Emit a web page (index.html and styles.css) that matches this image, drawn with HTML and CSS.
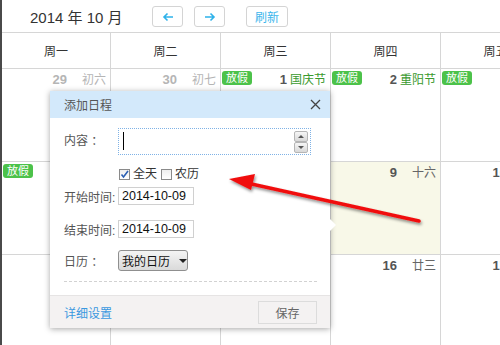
FILE: index.html
```html
<!DOCTYPE html>
<html lang="zh-CN">
<head>
  <meta charset="UTF-8">
  <title>日程</title>
  <link rel="stylesheet" href="styles.css">
</head>
<body>
  <div class="page">
    <div class="toolbar">
      <h2 class="month-title">2014 年 10 月</h2>
      <button class="nav-btn">
        <svg width="12" height="10" viewBox="0 0 12 10"><path d="M11 5H2M5.5 1.5L2 5l3.5 3.5" fill="none" stroke="#2eb2ea" stroke-width="1.6"/></svg>
      </button>
      <button class="nav-btn next">
        <svg width="12" height="10" viewBox="0 0 12 10"><path d="M1 5h9M6.5 1.5L10 5 6.5 8.5" fill="none" stroke="#2eb2ea" stroke-width="1.6"/></svg>
      </button>
      <button class="nav-btn refresh">刷新</button>
    </div>

    <div class="calendar">
      <div class="week-head">周一</div>
      <div class="week-head">周二</div>
      <div class="week-head">周三</div>
      <div class="week-head">周四</div>
      <div class="week-head">周五</div>

      <div class="day other"><span class="num">29</span><span class="lunar">初六</span></div>
      <div class="day other"><span class="num">30</span><span class="lunar">初七</span></div>
      <div class="day"><span class="badge">放假</span><span class="num">1</span><span class="lunar fest">国庆节</span></div>
      <div class="day"><span class="badge">放假</span><span class="num">2</span><span class="lunar fest">重阳节</span></div>
      <div class="day"><span class="badge">放假</span></div>

      <div class="day"><span class="badge">放假</span></div>
      <div class="day"></div>
      <div class="day"></div>
      <div class="day today"><span class="num">9</span><span class="lunar">十六</span></div>
      <div class="day"><span class="num">10</span><span class="lunar">十七</span></div>

      <div class="day"></div>
      <div class="day"></div>
      <div class="day"></div>
      <div class="day"><span class="num">16</span><span class="lunar">廿三</span></div>
      <div class="day"><span class="num">17</span><span class="lunar">廿四</span></div>
    </div>

    <div class="popup">
      <div class="popup-head">
        <span>添加日程</span>
        <svg class="close" width="11" height="11" viewBox="0 0 11 11"><path d="M1 1l9 9M10 1l-9 9" stroke="#444" stroke-width="1.3"/></svg>
      </div>
      <div class="popup-body">
        <div class="row content-row">
          <label class="field-label">内容 ：</label>
          <div class="textarea">
            <span class="caret"></span>
            <div class="spin">
              <span class="spin-btn"><i class="tri up"></i></span>
              <span class="spin-btn"><i class="tri down"></i></span>
            </div>
          </div>
        </div>
        <div class="row check-row">
          <span class="check on">
            <svg width="9" height="9" viewBox="0 0 9 9"><path d="M1.5 4.5l2 2.5L8 1" fill="none" stroke="#2b5fb3" stroke-width="1.6"/></svg>
          </span>
          <span class="check-text">全天</span>
          <span class="check"></span>
          <span class="check-text">农历</span>
        </div>
        <div class="row date-row">
          <label class="field-label">开始时间:</label>
          <div class="date-input">2014-10-09</div>
        </div>
        <div class="row date-row end">
          <label class="field-label">结束时间:</label>
          <div class="date-input">2014-10-09</div>
        </div>
        <div class="row cal-row">
          <label class="field-label">日历 ：</label>
          <div class="select">我的日历<i class="tri down dark"></i></div>
        </div>
        <div class="divider"></div>
      </div>
      <div class="popup-foot">
        <a href="#" class="more-link">详细设置</a>
        <button class="save-btn">保存</button>
      </div>
    </div>

    <svg class="pointer" width="500" height="345" viewBox="0 0 500 345">
      <defs>
        <filter id="shade" x="-10%" y="-50%" width="120%" height="200%">
          <feDropShadow dx="1" dy="2" stdDeviation="1.5" flood-color="#000" flood-opacity="0.45"/>
        </filter>
      </defs>
      <g filter="url(#shade)">
        <path d="M247 183L419 221" stroke="#f01010" stroke-width="3.5" stroke-linecap="round"/>
        <path d="M229 179L255 174L251 190Z" fill="#f01010"/>
      </g>
    </svg>
  </div>
</body>
</html>
```

FILE: styles.css
```css
* {
  box-sizing: border-box;
}
body {
  margin: 0;
  font-family: "Liberation Sans", "Noto Sans CJK SC", sans-serif;
  font-size: 12px;
  color: #333;
  background: #fff;
}
.page {
  position: relative;
  width: 500px;
  height: 345px;
  overflow: hidden;
  border-left: 2px solid #4a4a4a;
}

.toolbar {
  display: flex;
  align-items: center;
  height: 32px;
  padding-top: 1px;
}
.month-title {
  width: 150px;
  margin: 0;
  padding-left: 28px;
  font-size: 15px;
  font-weight: normal;
  color: #333;
}
.nav-btn {
  display: flex;
  align-items: center;
  justify-content: center;
  width: 31px;
  height: 21px;
  padding: 0;
  background: #fff;
  border: 1px solid #d4d4d4;
  border-radius: 3px;
  font-family: inherit;
}
.nav-btn.next {
  margin-left: 11px;
}
.nav-btn.refresh {
  width: 42px;
  margin-left: 21px;
  font-size: 12px;
  color: #3cb6ec;
}

.calendar {
  display: grid;
  grid-template-columns: 109px 110px 110px 110px 110px;
  grid-template-rows: 36px 93px 93px 93px;
  border-top: 1px solid #d6d6d6;
}
.week-head {
  display: flex;
  align-items: center;
  justify-content: center;
  border-right: 1px solid #d6d6d6;
  border-bottom: 1px solid #d6d6d6;
  font-size: 12px;
  color: #333;
}
.week-head:last-child {
  justify-content: flex-start;
  padding-left: 44px;
}
.day {
  display: flex;
  align-items: flex-start;
  justify-content: flex-end;
  padding: 2px 4px 0 0;
  border-right: 1px solid #d6d6d6;
  border-bottom: 1px solid #d6d6d6;
}
.day.today {
  background: #f8f8e8;
}
.num {
  margin-top: 1px;
  margin-right: 3px;
  font-size: 13px;
  font-weight: bold;
  line-height: 16px;
  color: #555;
}
.lunar {
  width: 36px;
  margin-top: 1px;
  text-align: right;
  font-size: 12px;
  line-height: 16px;
  color: #666;
  white-space: nowrap;
}
.lunar.fest {
  color: #3a9a2e;
}
.day.other .num,
.day.other .lunar {
  color: #b5b5b5;
}
.badge {
  margin-right: auto;
  margin-left: 1px;
  padding: 0 4px;
  height: 14px;
  line-height: 14px;
  font-size: 11px;
  color: #fff;
  background: #4cc24a;
  border-radius: 3px;
}

.popup {
  position: absolute;
  left: 48px;
  top: 91px;
  width: 280px;
  background: #fff;
  box-shadow: 0 1px 6px rgba(0, 0, 0, 0.35);
}
.popup::after {
  content: "";
  position: absolute;
  right: -6px;
  top: 128px;
  border-top: 6px solid transparent;
  border-bottom: 6px solid transparent;
  border-left: 6px solid #fff;
}
.popup-head {
  display: flex;
  align-items: center;
  justify-content: space-between;
  height: 27px;
  padding: 0 9px 0 14px;
  background: #d3e9fb;
  color: #555;
}
.popup-body {
  padding: 10px 14px 0;
}
.row {
  display: flex;
  align-items: center;
}
.field-label {
  width: 54px;
  color: #555;
  font-size: 12px;
}
.content-row {
  align-items: flex-start;
}
.content-row .field-label {
  margin-top: 3px;
}
.textarea {
  position: relative;
  width: 193px;
  height: 27px;
  border: 1px dotted #7fb2e6;
}
.caret {
  position: absolute;
  left: 4px;
  top: 3px;
  width: 1px;
  height: 18px;
  background: #000;
}
.spin {
  position: absolute;
  right: 2px;
  top: 2px;
  display: flex;
  flex-direction: column;
}
.spin-btn {
  display: flex;
  align-items: center;
  justify-content: center;
  width: 14px;
  height: 11px;
  background: linear-gradient(#f6f6f6, #d8d8d8);
  border: 1px solid #b5b5b5;
  border-radius: 2px;
}
.tri {
  width: 0;
  height: 0;
  border-left: 3px solid transparent;
  border-right: 3px solid transparent;
}
.tri.up {
  border-bottom: 3px solid #555;
}
.tri.down {
  border-top: 3px solid #555;
}
.tri.dark {
  margin-left: 9px;
  border-left-width: 4px;
  border-right-width: 4px;
  border-top: 4px solid #222;
}

.check-row {
  height: 13px;
  margin-top: 13px;
  padding-left: 55px;
}
.check {
  display: flex;
  align-items: center;
  justify-content: center;
  flex: none;
  width: 11px;
  height: 11px;
  border: 1px solid #8a8a8a;
  background: linear-gradient(#eee, #fff);
}
.check-text {
  margin: 0 4px 0 3px;
  font-size: 12px;
  line-height: 13px;
  color: #333;
}

.date-row {
  margin-top: 6px;
}
.date-row.end {
  margin-top: 15px;
}
.date-input {
  width: 76px;
  height: 18px;
  line-height: 16px;
  padding-left: 3px;
  border: 1px solid #d0d0d0;
  font-size: 12.5px;
  color: #111;
}
.cal-row {
  margin-top: 12px;
}
.select {
  display: flex;
  align-items: center;
  width: 70px;
  height: 21px;
  padding-left: 3px;
  border: 1px solid #8f8f8f;
  border-radius: 3px;
  background: linear-gradient(#f4f4f4, #dadada);
  font-size: 12px;
  color: #111;
}
.divider {
  margin-top: 10px;
  border-top: 1px dashed #d2d2d2;
  width: 253px;
}

.popup-foot {
  display: flex;
  align-items: center;
  justify-content: space-between;
  height: 33px;
  margin-top: 13px;
  padding: 0 13px 0 14px;
  background: #f4f2f2;
  border-top: 1px solid #e6e4e4;
}
.more-link {
  color: #3a98e0;
  text-decoration: none;
}
.save-btn {
  width: 59px;
  height: 23px;
  padding: 0;
  background: #f4f2f2;
  border: 1px solid #dcdcdc;
  font-family: inherit;
  font-size: 12px;
  color: #666;
}

.pointer {
  position: absolute;
  left: -2px;
  top: 0;
  pointer-events: none;
}
```
